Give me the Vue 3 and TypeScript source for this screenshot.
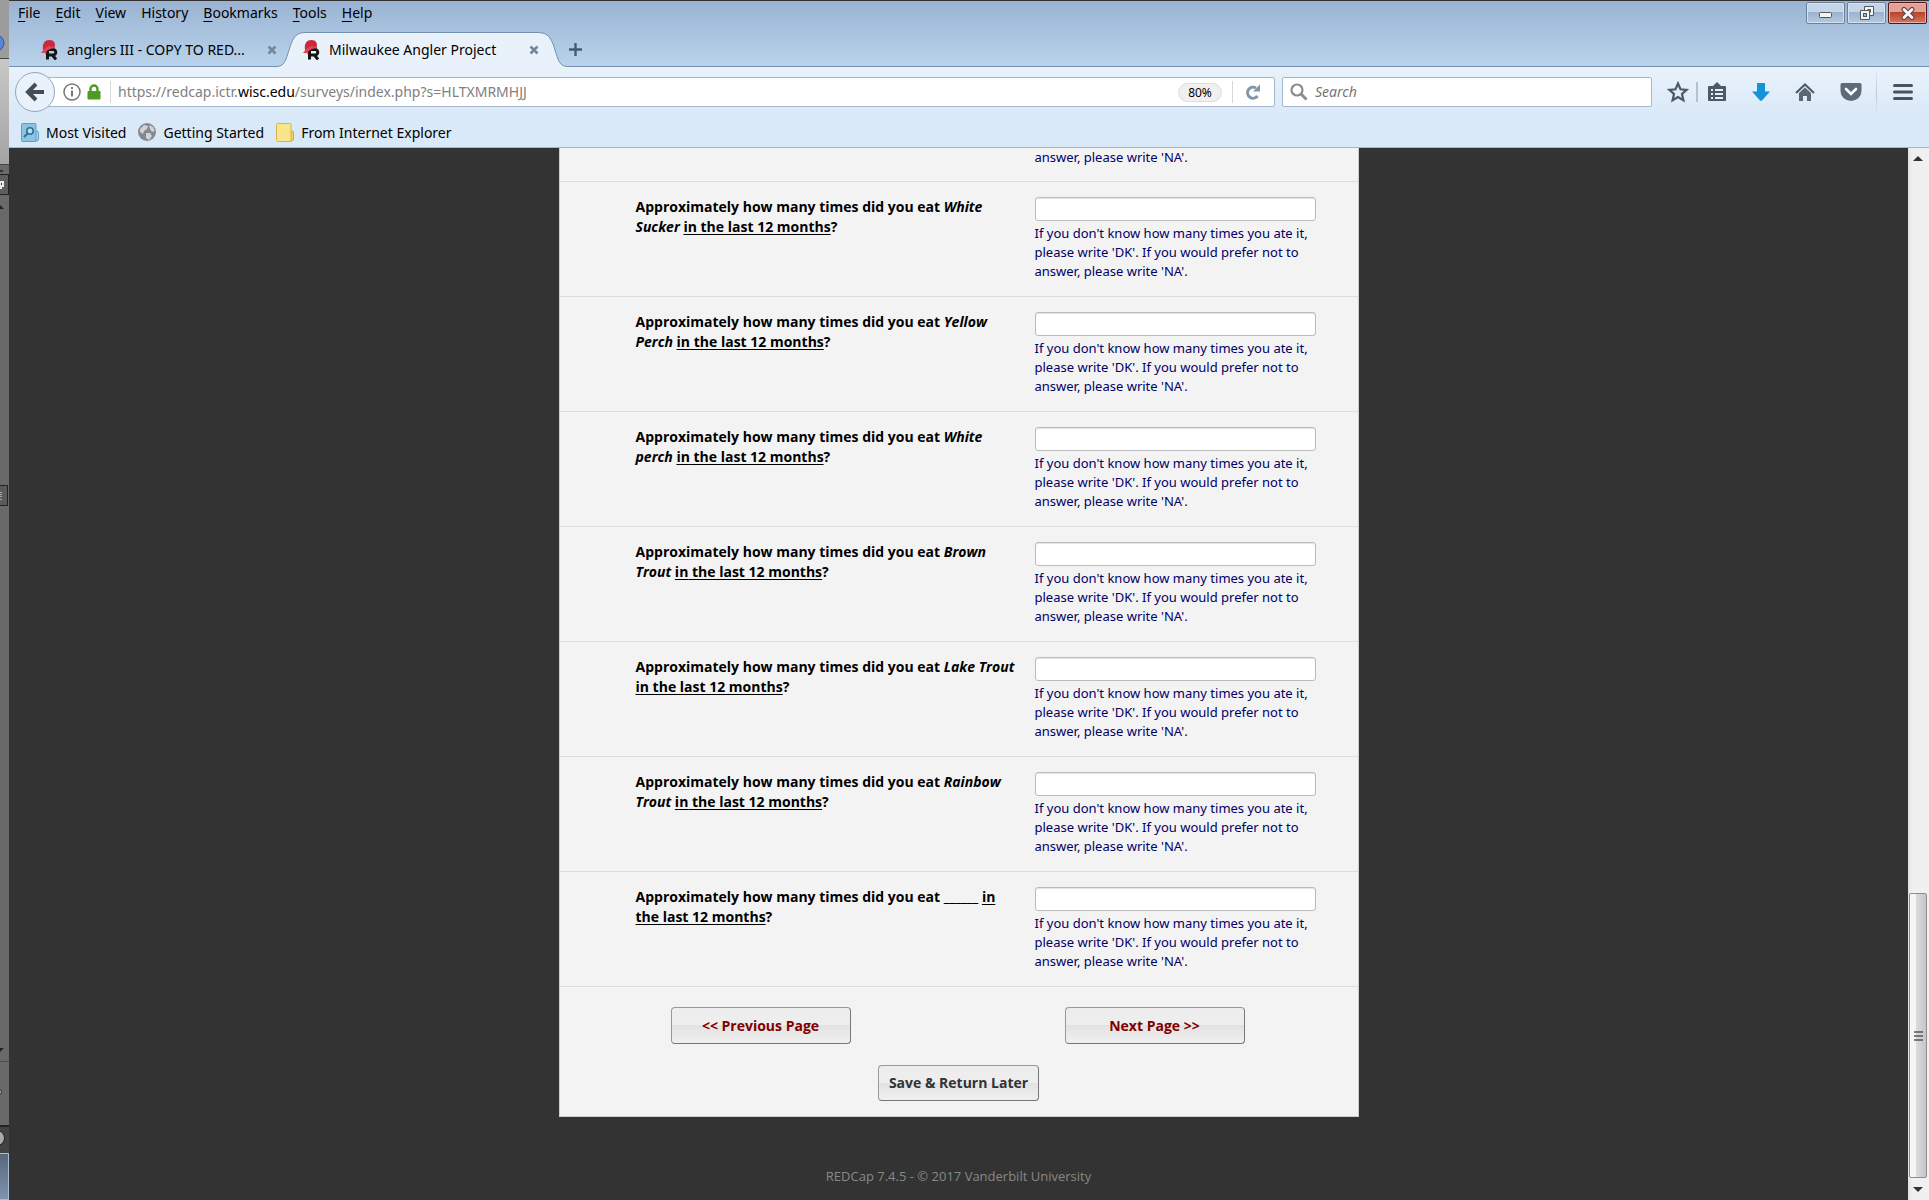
<script setup lang="ts">
import { ref } from 'vue'

interface MenuItem { before: string; key: string; after: string }
interface Question { id: string; fish: string[]; answer: string }

const menu: MenuItem[] = [
  { before: '', key: 'F', after: 'ile' },
  { before: '', key: 'E', after: 'dit' },
  { before: '', key: 'V', after: 'iew' },
  { before: 'Hi', key: 's', after: 'tory' },
  { before: '', key: 'B', after: 'ookmarks' },
  { before: '', key: 'T', after: 'ools' },
  { before: '', key: 'H', after: 'elp' },
]

// An empty fish name is drawn as a blank line.
const questions = ref<Question[]>([
  { id: 'sucker', fish: ['White', 'Sucker'], answer: '' },
  { id: 'yperch', fish: ['Yellow', 'Perch'], answer: '' },
  { id: 'wperch', fish: ['White', 'perch'], answer: '' },
  { id: 'brown', fish: ['Brown', 'Trout'], answer: '' },
  { id: 'lake', fish: ['Lake', 'Trout'], answer: '' },
  { id: 'rainbow', fish: ['Rainbow', 'Trout'], answer: '' },
  { id: 'other', fish: [], answer: '' },
])
</script>

<template>
  <div class="screen">
    <svg class="behind" width="9" height="1200" viewBox="0 0 9 1200" aria-hidden="true">
      <defs>
        <linearGradient id="bg1" x1="0" y1="0" x2="0" y2="1"><stop offset="0" stop-color="#c8c8c8" /><stop offset="1" stop-color="#a4a4a4" /></linearGradient>
        <linearGradient id="bg2" x1="0" y1="0" x2="0" y2="1"><stop offset="0" stop-color="#56657a" /><stop offset="1" stop-color="#8194af" /></linearGradient>
      </defs>
      <rect width="9" height="1200" fill="#696969" />
      <rect width="9" height="58" fill="#9c9c9c" />
      <circle cx="-4" cy="43" r="8" fill="#5585d6" stroke="#2d5cae" />
      <rect y="58" width="9" height="1" fill="#444" />
      <rect y="59" width="9" height="105" fill="url(#bg1)" />
      <rect y="164" width="9" height="1" fill="#444" />
      <rect y="170" width="3" height="2" fill="#333" />
      <rect x="-4" y="174.500" width="12.500" height="20" fill="#5d5d5d" stroke="#222" />
      <path d="M0 181h4v6h-2v2h-2z" fill="#e8e8ee" /><rect x="1" y="183" width="1" height="2" fill="#333" />
      <path d="M0 205v4h4z" fill="#222" />
      <rect x="-4" y="485.500" width="11.500" height="20" fill="#5a5a5a" stroke="#222" />
      <path d="M0 492.500h2M0 494.500h2M0 496.500h2M0 499.500h2" stroke="#aaa" />
      <path d="M0 1048h4l-4 4z" fill="#222" />
      <rect y="1061" width="9" height="1" fill="#4d4d4d" />
      <rect x="-3" y="1089.500" width="4.500" height="5" rx="2" fill="#999" stroke="#333" />
      <rect y="1125" width="9" height="28" fill="#424242" />
      <rect y="1125" width="9" height="2" fill="#222" />
      <circle cx="-3" cy="1138" r="7.500" fill="#aaa" stroke="#222" />
      <rect y="1153" width="9" height="47" fill="url(#bg2)" />
      <path d="M0 1153.500h8.500v46h-8.500" fill="none" stroke="#a9bdd3" />
    </svg>

    <div class="browser">
      <header class="titlebar">
        <div class="menurow">
          <nav class="menus">
            <a v-for="m in menu" :key="m.key" href="#">{{ m.before }}<u>{{ m.key }}</u>{{ m.after }}</a>
          </nav>
          <div class="winbtns">
            <button type="button" aria-label="Minimize">
              <svg width="14" height="7" viewBox="0 0 14 7"><rect x=".5" y=".5" width="12" height="5" rx="1" fill="#f4f4f4" stroke="#53555f" /></svg>
            </button>
            <button type="button" aria-label="Restore">
              <svg width="16" height="16" viewBox="0 0 16 16"><path d="M5.500 1.500h9v9h-9z" fill="#f4f4f4" stroke="#53555f" /><path d="M8.500 4.500h3v3" fill="none" stroke="#53555f" /><path d="M1.500 5.500h9v9h-9z" fill="#f4f4f4" stroke="#53555f" /><rect x="4.500" y="8.500" width="3" height="3" fill="#9fb6d2" stroke="#53555f" /></svg>
            </button>
            <button type="button" class="close" aria-label="Close">
              <svg width="14" height="13" viewBox="0 0 14 13"><path d="M3 2.500l8 8M11 2.500l-8 8" stroke="#53403f" stroke-width="5" stroke-linecap="round" /><path d="M3 2.500l8 8M11 2.500l-8 8" stroke="#f4f4f4" stroke-width="3" stroke-linecap="round" /></svg>
            </button>
          </div>
        </div>
        <div class="tabs">
          <div v-for="t in 2" :key="t" class="tab" :class="{ active: t === 2 }">
            <svg v-if="t === 2" class="tabshape" width="290" height="35" viewBox="0 0 290 35" aria-hidden="true">
              <path d="M0 35V34.500C8 34 9 27 12 18S17 .500 28 .500H261C273 .500 275 9 278 18S282 34 290 34.500V35z" fill="#e9f2fb" />
              <path d="M0 34.500C8 34 9 27 12 18S17 .500 28 .500H261C273 .500 275 9 278 18S282 34 290 34.500" fill="none" stroke="#7690b1" />
            </svg>
            <svg class="fav" width="17" height="20" viewBox="0 0 17 20" aria-hidden="true">
              <path d="M6.500 19.500V9.500H12a2.800 2.800 0 0 1 0 5.600H7M11 14.500l4 5" fill="none" stroke="#151515" stroke-width="3" />
              <path d="M2 10C1 3 4 0 8.500 0S15 3 13.500 8L9 8l-5 3z" fill="#c92a3c" />
              <path d="M0 13l3-4 5-3 6 1v1L9 9 5.500 11 5 15l-1-2z" fill="#dd4556" />
            </svg>
            <span class="label">{{ t === 1 ? 'anglers III - COPY TO RED...' : 'Milwaukee Angler Project' }}</span>
            <button type="button" class="tabclose" aria-label="Close tab">
              <svg width="10" height="10" viewBox="0 0 10 10"><path d="M1.500 1.500l7 7M8.500 1.500l-7 7" stroke="#75879b" stroke-width="2.600" /></svg>
            </button>
          </div>
          <button type="button" class="newtab" aria-label="New tab">
            <svg width="13" height="13" viewBox="0 0 13 13"><path d="M6.500 0v13M0 6.500h13" stroke="#4b5a6b" stroke-width="2.400" /></svg>
          </button>
        </div>
      </header>

      <div class="chrome">
        <div class="nav">
          <button type="button" class="back" aria-label="Back">
            <svg width="20" height="20" viewBox="0 0 20 20"><path d="M19 10H4M11 2l-8 8 8 8" fill="none" stroke="#444d57" stroke-width="4" /></svg>
          </button>
          <div class="urlbar">
            <svg width="18" height="18" viewBox="0 0 18 18" aria-hidden="true"><circle cx="9" cy="9" r="8" fill="none" stroke="#777" stroke-width="1.500" /><rect x="8" y="4" width="2" height="2" fill="#777" /><rect x="8" y="7.500" width="2" height="6" fill="#777" /></svg>
            <svg class="lock" width="14" height="16" viewBox="0 0 14 16" aria-hidden="true"><path d="M3.500 8V5a3.500 3.500 0 0 1 7 0v3" fill="none" stroke="#4e9a22" stroke-width="2.400" /><rect x=".5" y="7" width="13" height="8.500" rx="1" fill="#4e9a22" /></svg>
            <span class="usep"></span>
            <span class="url">https://redcap.ictr.<b>wisc.edu</b>/surveys/index.php?s=HLTXMRMHJJ</span>
            <button type="button" class="zoom">80%</button>
            <span class="usep"></span>
            <button type="button" class="reload" aria-label="Reload">
              <svg width="16" height="16" viewBox="0 0 16 16"><path d="M12.500 12A5.500 5.500 0 1 1 11 4" fill="none" stroke="#8296aa" stroke-width="3" /><path d="M15 .500V7.500H8z" fill="#8296aa" /></svg>
            </button>
          </div>
          <label class="search">
            <svg width="18" height="18" viewBox="0 0 18 18" aria-hidden="true"><circle cx="7" cy="7" r="5.500" fill="none" stroke="#8c8c8c" stroke-width="2.200" /><path d="M11 11l5.500 5.500" stroke="#8c8c8c" stroke-width="3" /></svg>
            <input type="search" placeholder="Search" aria-label="Search">
          </label>
          <div class="tools">
            <button type="button" aria-label="Bookmark">
              <svg width="22" height="22" viewBox="0 0 22 22"><path d="M11 2.500l2.500 5.800 6.200.6-4.700 4.100 1.400 6.200L11 16l-5.400 3.200L7 13 2.300 8.900l6.200-.6z" fill="none" stroke="#4c5966" stroke-width="2.200" /></svg>
            </button>
            <span class="tsep"></span>
            <button type="button" aria-label="Bookmarks list">
              <svg width="20" height="20" viewBox="0 0 20 20"><path d="M2 4h4l4-4 4 4h4q1 0 1 1v13q0 1-1 1H2q-1 0-1-1V5q0-1 1-1z" fill="#4c5966" /><path d="M8 8h8M8 12h8M8 16h8M4 8h2M4 12h2M4 16h2" stroke="#e5effa" stroke-width="2" /></svg>
            </button>
            <button type="button" class="spaced" aria-label="Downloads">
              <svg width="18" height="18" viewBox="0 0 18 18"><path d="M5 0h8v8.500h5L10 17.500q-1 .5-2 0L0 8.500h5z" fill="#1393d8" /></svg>
            </button>
            <button type="button" class="spaced" aria-label="Home">
              <svg width="20" height="20" viewBox="0 0 20 20"><path d="M1 11l9-8.500 9 8.500" fill="none" stroke="#4c5966" stroke-width="2" /><path d="M4 11l6-5.500 6 5.500v8h-4v-5H8v5H4z" fill="#5a6774" /></svg>
            </button>
            <button type="button" class="spaced" aria-label="Pocket">
              <svg width="22" height="20" viewBox="0 0 22 20"><path d="M2 1h18q1.500 0 1.500 1.500V9a10.500 10 0 0 1-21 0V2.500Q.5 1 2 1z" fill="#5d6a78" /><path d="M6 7l5 5 5-5" fill="none" stroke="#fff" stroke-width="2.600" stroke-linecap="round" /></svg>
            </button>
            <span class="bigsep"></span>
            <button type="button" aria-label="Menu">
              <svg width="20" height="18" viewBox="0 0 20 18"><path d="M1.500 2.500h17M1.500 9h17M1.500 15.500h17" stroke="#46535f" stroke-width="3" stroke-linecap="round" /></svg>
            </button>
          </div>
        </div>
        <nav class="bookmarks">
          <a href="#">
            <svg width="18" height="20" viewBox="0 0 18 20" aria-hidden="true"><path d="M14 8h2q1.500 0 1.500 2v6q0 2-2 2H14z" fill="#a9d3ee" stroke="#5e9fc4" /><rect x=".5" y=".5" width="14.500" height="18" rx="1" fill="#8cc3e2" stroke="#5e9fc4" /><circle cx="9" cy="8" r="3.200" fill="#b8def2" stroke="#2f6f98" stroke-width="1.600" /><path d="M6.500 10.500L3 14" stroke="#2f6f98" stroke-width="2" /></svg>
            Most Visited</a>
          <a href="#">
            <svg width="18" height="20" viewBox="0 0 18 20" aria-hidden="true"><circle cx="9" cy="9" r="9" fill="#85898f" /><path d="M2 6l4-4 4 1-1 3-3 2-1 3-3-2zM11 2l4 2 2 4-3 1-2-3zM8 10l4 0 2 3-3 4-3-2z" fill="#d0d4d8" /></svg>
            Getting Started</a>
          <a href="#">
            <svg width="18" height="20" viewBox="0 0 18 20" aria-hidden="true"><path d="M14 8h2q1.500 0 1.500 2v6q0 2-2 2H14z" fill="#edd06a" stroke="#d0ac3e" /><rect x=".5" y=".5" width="14.500" height="18" rx="1" fill="#f8e68d" stroke="#d6b44a" /></svg>
            From Internet Explorer</a>
        </nav>
      </div>

      <div class="viewport">
        <main class="page">
          <form class="survey" @submit.prevent>
            <div class="row partial"><p class="note">answer, please write 'NA'.</p></div>
            <div v-for="q in questions" :key="q.id" class="row">
              <label class="question" :for="q.id">Approximately how many times did you eat <template v-for="word in q.fish" :key="word"><em>{{ word }}</em>{{ ' ' }}</template><template v-if="!q.fish.length">______ </template><u>in</u><u>&#32;the last 12 months</u>?</label>
              <div class="answer">
                <input :id="q.id" v-model="q.answer" type="text">
                <p class="note">If you don't know how many times you ate it, please write 'DK'. If you would prefer not to answer, please write 'NA'.</p>
              </div>
            </div>
            <div class="pager">
              <button type="button" class="btn wide">&lt;&lt; Previous Page</button>
              <button type="submit" class="btn wide">Next Page &gt;&gt;</button>
            </div>
            <div class="save"><button type="button" class="btn">Save &amp; Return Later</button></div>
          </form>
          <footer>REDCap 7.4.5 - © 2017 Vanderbilt University</footer>
        </main>
        <div class="scroll" aria-hidden="true">
          <svg width="10" height="5" viewBox="0 0 10 5"><path d="M0 5l5-5 5 5z" fill="#333" /></svg>
          <div class="thumb">
            <svg width="9" height="10" viewBox="0 0 9 10"><path d="M0 1h9M0 5h9M0 9h9" stroke="#555" stroke-width="1.500" /></svg>
          </div>
          <svg width="10" height="5" viewBox="0 0 10 5"><path d="M0 0l5 5 5-5z" fill="#333" /></svg>
        </div>
      </div>
    </div>
  </div>
</template>

<style>
body { background: #333; }
</style>

<style scoped>
* { box-sizing: border-box; }
.screen { display: flex; height: 100vh; overflow: hidden; font: 14px/20px "Noto Sans", "Open Sans", sans-serif; color: #000; }
.behind { flex: none; }
svg { display: block; flex: none; }
button { margin: 0; padding: 0; border: 0; background: none; font: inherit; color: inherit; }
a { color: inherit; text-decoration: none; }
.browser { flex: 1; min-width: 0; display: flex; flex-direction: column; }
.titlebar { flex: none; height: 67px; border-top: 1px solid #333; border-bottom: 1px solid #7690b1; background: linear-gradient(#9ab3d2, #b9d3ec); }
.menurow { display: flex; justify-content: space-between; height: 31px; }
.menus { display: flex; gap: 15px; padding: 2px 9px; }
.menus u { text-underline-offset: 3px; }
.winbtns { display: flex; gap: 2px; padding: 1px 2px; }
.winbtns button { display: flex; align-items: center; justify-content: center; width: 39px; height: 22px; border: 1px solid #6e809c; border-radius: 2px; background: linear-gradient(#c5d5e8 0 45%, #9ab2cf 45%, #b4c9e0); box-shadow: inset 0 0 0 1px #d5e1ef; }
.winbtns button:first-child { padding-top: 5px; }
.winbtns .close { border-color: #54141c; background: linear-gradient(#e3a196 0 45%, #b8402a 45%, #d37a62); box-shadow: inset 0 0 0 1px #e6b0a6; }
.tabs { display: flex; height: 35px; }
.tab { position: relative; display: flex; align-items: center; flex: none; width: 268px; padding-left: 32px; }
.tab.active { width: 290px; padding-left: 26px; }
.tabshape { position: absolute; left: 0; top: 0; }
.fav, .label, .tabclose { position: relative; }
.label { width: 200px; margin-left: 9px; white-space: nowrap; }
.newtab { padding: 0 2px; }
.chrome { flex: none; border-bottom: 1px solid #a3b8d0; background: linear-gradient(#e9f2fb, #dae9f8 60%); }
.nav { display: flex; align-items: center; height: 50px; padding: 0 16px 0 6px; }
.back { position: relative; display: flex; align-items: center; justify-content: center; flex: none; width: 40px; height: 40px; margin-right: -20px; border: 1px solid #93a7c2; border-radius: 50%; background: #e9f2fb; }
.urlbar { display: flex; align-items: center; flex: 1; min-width: 0; height: 30px; padding: 0 13px 0 27px; border: 1px solid #a3b8d0; border-radius: 2px; background: #fff; }
.lock { margin: 0 9px 0 6px; }
.usep { flex: none; width: 1px; height: 22px; background: #d8d8d8; }
.url { flex: 1; margin-left: 7px; color: #808080; white-space: nowrap; }
.url b { color: #000; font-weight: 400; }
.zoom { width: 44px; height: 19px; margin-right: 10px; border: 1px solid #ddd; border-radius: 10px; background: #f0f0f0; font-size: 12px; line-height: 17px; }
.reload { margin-left: 12px; }
.search { display: flex; align-items: center; gap: 7px; flex: none; width: 370px; height: 30px; margin-left: 7px; padding-left: 7px; border: 1px solid #a3b8d0; border-radius: 2px; background: #fff; }
.search input { flex: 1; min-width: 0; padding: 0; border: 0; outline: 0; background: none; font: inherit; }
.search input::placeholder { color: #757575; font-style: italic; }
.tools { display: flex; align-items: center; flex: none; margin-left: 15px; }
.tsep { width: 2px; height: 20px; margin: 0 9px 0 7px; background: #b5c2d0; }
.spaced { margin-left: 25px; }
.bigsep { width: 1px; height: 48px; margin: 0 16px 0 14px; background: linear-gradient(transparent, #b9c7d8, transparent); }
.bookmarks { display: flex; align-items: center; gap: 12px; height: 30px; padding: 2px 12px 0; }
.bookmarks a { display: flex; align-items: center; gap: 7px; }
.viewport { flex: 1; min-height: 0; display: flex; background: #333; }
.page { flex: 1; min-width: 0; overflow: hidden; font-family: "Open Sans", "Noto Sans", sans-serif; }
.survey { width: 800px; margin: 0 auto; padding-bottom: 15px; border: 1px solid #ccc; border-top: 0; background: #f3f3f3; }
.row { display: flex; justify-content: space-between; padding: 15px 42px 15px 76px; border-bottom: 1px solid #ddd; }
.row.partial { justify-content: flex-end; height: 34px; padding-top: 0; padding-bottom: 0; }
.partial .note { width: 281px; margin: 0; }
.question { width: 380px; font-weight: 700; font-size: 14px; line-height: 20px; }
.question u { text-underline-offset: 2px; }
.answer { width: 281px; }
.answer input { display: block; width: 100%; height: 24px; padding: 0 4px; border: 1px solid #bbb; border-radius: 3px; background: #fff; box-shadow: inset 0 1px 1px #e4e4e4; font: inherit; }
.note { margin: 3px 0 0; color: #000066; font-family: "Noto Sans", "Open Sans", sans-serif; font-size: 13px; line-height: 19px; }
.pager { display: flex; justify-content: space-between; padding: 20px 113px 0 111px; }
.btn { height: 36px; padding: 0 10px; border: 1px solid #999; border-right-color: #777; border-bottom-color: #777; border-radius: 4px; background: linear-gradient(#ededed, #eee 50%, #e2e2e2 50%, #f0f0f0); color: #333; font-size: 14px; font-weight: 700; }
.wide { width: 180px; height: 37px; color: #800000; }
.save { padding-top: 21px; text-align: center; }
.save .btn { display: inline-block; vertical-align: top; }
footer { padding-top: 49px; color: #888; font-size: 13px; line-height: 20px; text-align: center; }
.scroll { display: flex; flex-direction: column; align-items: center; flex: none; width: 21px; padding: 8px 2px 8px 1px; background: linear-gradient(90deg, #e3e3e3, #f0f0f0 20%, #f0f0f0); }
.thumb { display: flex; align-items: center; justify-content: center; width: 100%; height: 285px; margin: auto 0 9px; border: 1px solid #8e8e8e; border-radius: 2px; background: linear-gradient(90deg, #f5f5f5 0 35%, #d9dadc 40%, #c4c5c9); }
</style>
